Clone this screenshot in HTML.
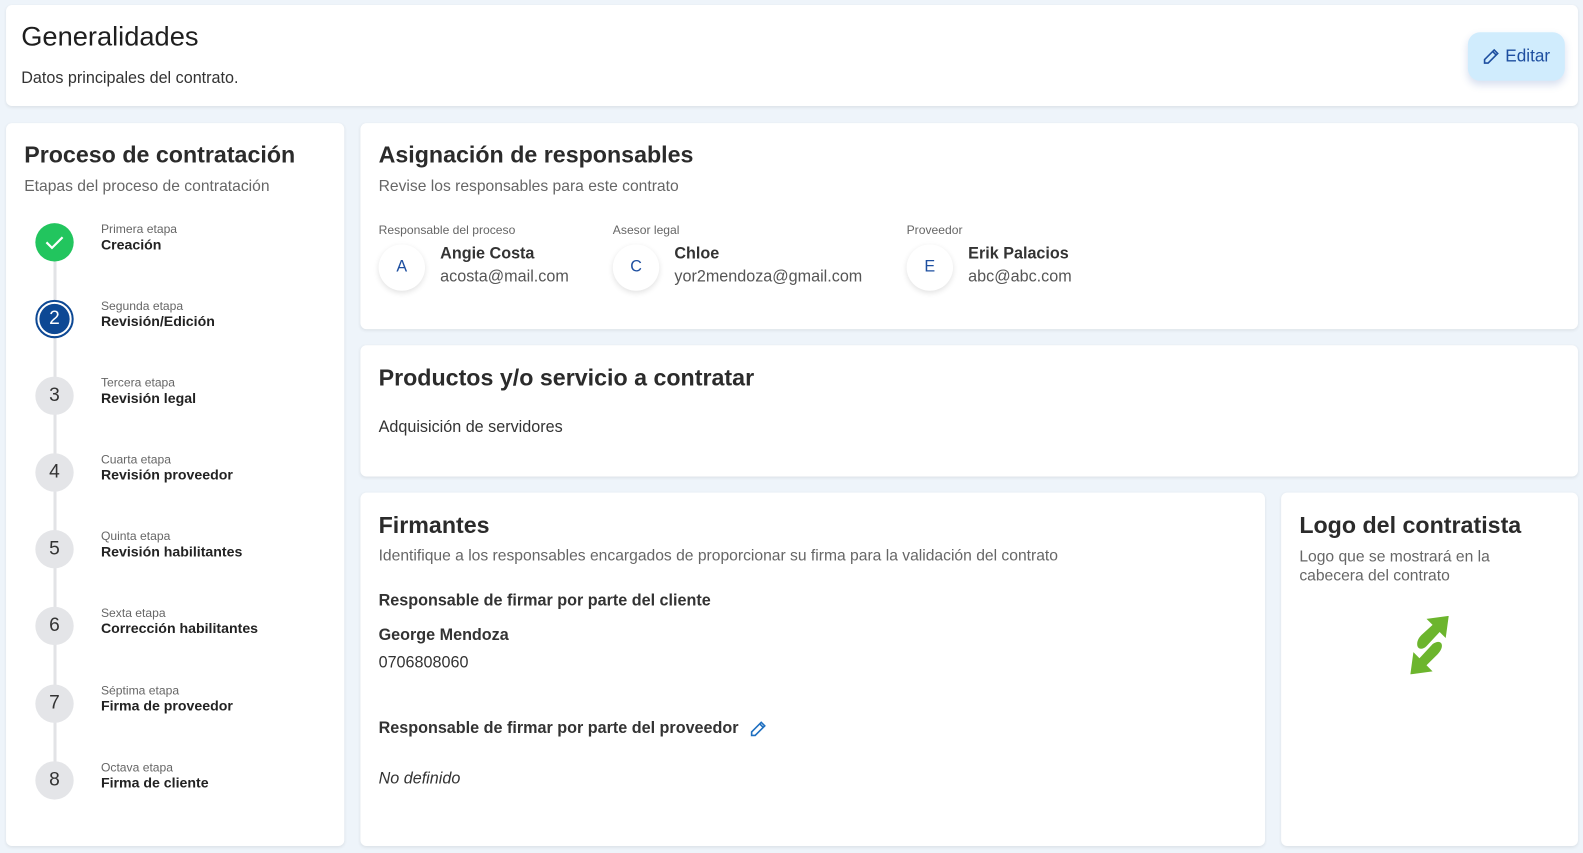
<!DOCTYPE html>
<html><head><meta charset="utf-8"><style>
*{box-sizing:border-box;margin:0;padding:0}
html,body{width:1583px;height:853px;overflow:hidden;background:#eef4fa}
#w{width:1568px;height:845px;position:relative;transform:scale(1.00957);transform-origin:0 0;font-family:"Liberation Sans",sans-serif;color:#222}
.card{position:absolute;background:#fff;border-radius:6px;box-shadow:0 1px 3px rgba(0,0,0,.08)}
.abs{position:absolute;white-space:nowrap}
h2{font-size:23px;font-weight:bold;color:#2b2b2b;position:absolute;white-space:nowrap}
.sub{font-size:15.5px;color:#666}
.circ{position:absolute;left:29px;width:38px;height:38px;border-radius:50%;background:#e4e5e8;color:#333;font-size:19px;text-align:center;line-height:38px}
.lbl{position:absolute;left:94px;white-space:nowrap}
.lbl small{display:block;font-size:12px;color:#666}
.lbl b{display:block;font-size:14px;color:#222}
.av{position:absolute;width:46px;height:46px;border-radius:50%;background:#fff;box-shadow:0 2px 6px rgba(0,0,0,.12);color:#1e4fa0;font-size:16px;text-align:center;line-height:46px}
</style></head><body><div id="w">
<div class="card" style="left:6px;top:5px;width:1557px;height:100px">
 <div class="abs" style="left:15px;top:16px;font-size:27px;color:#1e1e1e">Generalidades</div>
 <div class="abs" style="left:15px;top:64px;font-size:16px;color:#333">Datos principales del contrato.</div>
 <div class="abs" style="left:1448px;top:27px;width:96px;height:48px;border-radius:12px;background:#d0ecfd;box-shadow:0 4px 8px rgba(60,100,180,.2);color:#1e4fa0;font-size:17px;line-height:48px;padding-left:37px">Editar
  <svg style="position:absolute;left:14px;top:15px" width="18" height="18" viewBox="0 0 18 18" fill="none" stroke="#1e4fa0" stroke-width="1.6"><path d="M12 2.5l3.5 3.5L6 15.5H2.5V12z M10.5 4l3.5 3.5"/></svg></div>
</div>

<div class="card" style="left:6px;top:122px;width:335px;height:716px">
 <h2 style="left:18px;top:18px">Proceso de contratación</h2>
 <div class="abs sub" style="left:18px;top:54px">Etapas del proceso de contratación</div>
 <div style="position:absolute;left:47px;top:120px;width:3px;height:540px;background:#e2e3e6"></div>
 <div class="circ" style="top:99px;background:#22c55e"><svg width="38" height="38" viewBox="0 0 38 38"><path d="M11 19l5.5 5.5L27 14" fill="none" stroke="#fff" stroke-width="2.2"/></svg></div>
 <div class="circ" style="top:175px;background:#fff;border:2px solid #0d4894;line-height:30px;color:#fff"><span style="display:block;margin:2px;border-radius:50%;background:#0d4894;line-height:30px">2</span></div>
 <div class="circ" style="top:251px">3</div>
 <div class="circ" style="top:327px">4</div>
 <div class="circ" style="top:403px">5</div>
 <div class="circ" style="top:479px">6</div>
 <div class="circ" style="top:556px">7</div>
 <div class="circ" style="top:632px">8</div>
 <div class="lbl" style="top:98px"><small>Primera etapa</small><b>Creación</b></div>
 <div class="lbl" style="top:174px"><small>Segunda etapa</small><b>Revisión/Edición</b></div>
 <div class="lbl" style="top:250px"><small>Tercera etapa</small><b>Revisión legal</b></div>
 <div class="lbl" style="top:326px"><small>Cuarta etapa</small><b>Revisión proveedor</b></div>
 <div class="lbl" style="top:402px"><small>Quinta etapa</small><b>Revisión habilitantes</b></div>
 <div class="lbl" style="top:478px"><small>Sexta etapa</small><b>Corrección habilitantes</b></div>
 <div class="lbl" style="top:555px"><small>Séptima etapa</small><b>Firma de proveedor</b></div>
 <div class="lbl" style="top:631px"><small>Octava etapa</small><b>Firma de cliente</b></div>
</div>

<div class="card" style="left:357px;top:122px;width:1206px;height:204px">
 <h2 style="left:18px;top:18px">Asignación de responsables</h2>
 <div class="abs sub" style="left:18px;top:54px">Revise los responsables para este contrato</div>
 <div class="abs" style="left:18px;top:99px;font-size:12px;color:#666">Responsable del proceso</div>
 <div class="av" style="left:18px;top:120px">A</div>
 <div class="abs" style="left:79px;top:121px;font-size:16px;font-weight:bold;color:#333">Angie Costa</div>
 <div class="abs" style="left:79px;top:144px;font-size:16px;color:#555">acosta@mail.com</div>
 <div class="abs" style="left:250px;top:99px;font-size:12px;color:#666">Asesor legal</div>
 <div class="av" style="left:250px;top:120px">C</div>
 <div class="abs" style="left:311px;top:121px;font-size:16px;font-weight:bold;color:#333">Chloe</div>
 <div class="abs" style="left:311px;top:144px;font-size:16px;color:#555">yor2mendoza@gmail.com</div>
 <div class="abs" style="left:541px;top:99px;font-size:12px;color:#666">Proveedor</div>
 <div class="av" style="left:541px;top:120px">E</div>
 <div class="abs" style="left:602px;top:121px;font-size:16px;font-weight:bold;color:#333">Erik Palacios</div>
 <div class="abs" style="left:602px;top:144px;font-size:16px;color:#555">abc@abc.com</div>
</div>

<div class="card" style="left:357px;top:342px;width:1206px;height:130px">
 <h2 style="left:18px;top:19px">Productos y/o servicio a contratar</h2>
 <div class="abs" style="left:18px;top:73px;font-size:16px;color:#333">Adquisición de servidores</div>
</div>

<div class="card" style="left:357px;top:488px;width:896px;height:350px">
 <h2 style="left:18px;top:19px">Firmantes</h2>
 <div class="abs sub" style="left:18px;top:54px">Identifique a los responsables encargados de proporcionar su firma para la validación del contrato</div>
 <div class="abs" style="left:18px;top:99px;font-size:16px;font-weight:bold;color:#333">Responsable de firmar por parte del cliente</div>
 <div class="abs" style="left:18px;top:133px;font-size:16px;font-weight:bold;color:#333">George Mendoza</div>
 <div class="abs" style="left:18px;top:160px;font-size:16px;color:#333">0706808060</div>
 <div class="abs" style="left:18px;top:225px;font-size:16px;font-weight:bold;color:#333">Responsable de firmar por parte del proveedor</div>
 <svg style="position:absolute;left:385px;top:225px" width="18" height="18" viewBox="0 0 18 18" fill="none" stroke="#1e6fc0" stroke-width="1.6"><path d="M12 2.5l3.5 3.5L6 15.5H2.5V12z M10.5 4l3.5 3.5"/></svg>
 <div class="abs" style="left:18px;top:275px;font-size:16px;font-style:italic;color:#333">No definido</div>
</div>

<div class="card" style="left:1269px;top:488px;width:294px;height:350px">
 <h2 style="left:18px;top:19px">Logo del contratista</h2>
 <div class="abs sub" style="left:18px;top:54px;white-space:normal;width:220px;line-height:19px">Logo que se mostrará en la cabecera del contrato</div>
 <svg style="position:absolute;left:126px;top:122px" width="42" height="58" viewBox="0 0 42 58"><path d="M40 0L37 22L31 16L18 30C14 34 10 33 9 30C8 26 10 22 13 19L24 9L18 3Z" fill="#6cb52d"/><path d="M2 58L5 36L11 42L24 28C28 25 32 25 33 28C34 31 32 35 29 38L18 49L24 55Z" fill="#6cb52d"/></svg>
</div>
</div></body></html>
